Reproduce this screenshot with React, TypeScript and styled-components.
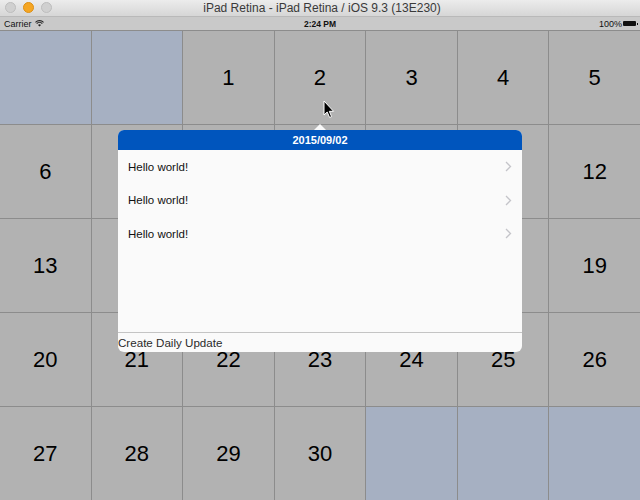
import React from 'react';
import styled, { createGlobalStyle } from 'styled-components';

const GlobalStyle = createGlobalStyle`
  html, body {
    margin: 0;
    padding: 0;
    width: 640px;
    height: 500px;
    overflow: hidden;
    font-family: "Liberation Sans", Arial, sans-serif;
    background: #b2b2b2;
  }
`;

// blank cells are null
const days: (number | null)[] = [
  null, null, 1, 2, 3, 4, 5,
  6, 7, 8, 9, 10, 11, 12,
  13, 14, 15, 16, 17, 18, 19,
  20, 21, 22, 23, 24, 25, 26,
  27, 28, 29, 30, null, null, null,
];

const items = ['Hello world!', 'Hello world!', 'Hello world!'];

export default function App() {
  return (
    <Screen>
      <GlobalStyle />
      <TitleBar>
        <Lights>
          <Light />
          <Light $color="#f5a623" $border="#dd8f14" />
          <Light />
        </Lights>
        <WindowTitle>iPad Retina - iPad Retina / iOS 9.3 (13E230)</WindowTitle>
      </TitleBar>
      <StatusBar>
        <StatusLeft>
          Carrier
          <svg width="9" height="7" viewBox="0 0 10 8">
            <path d="M5 7.5 L3.3 5.6 A2.4 2.4 0 0 1 6.7 5.6 Z" fill="#222" />
            <path d="M1.8 4.1 A4.6 4.6 0 0 1 8.2 4.1" stroke="#222" strokeWidth="1.2" fill="none" />
            <path d="M0.4 2.6 A6.6 6.6 0 0 1 9.6 2.6" stroke="#222" strokeWidth="1.2" fill="none" />
          </svg>
        </StatusLeft>
        <StatusTime>2:24 PM</StatusTime>
        <StatusRight>
          100%
          <Battery />
        </StatusRight>
      </StatusBar>
      <Calendar>
        {days.map((d, i) => (
          <Cell key={i} $blank={d === null}>{d}</Cell>
        ))}
      </Calendar>

      <Popover>
        <Arrow />
        <PopHeader>2015/09/02</PopHeader>
        <PopList>
          {items.map((t, i) => (
            <PopRow key={i}>
              <span>{t}</span>
              <svg width="7" height="11" viewBox="0 0 7 11">
                <path d="M1 1 L5.5 5.5 L1 10" stroke="#c4c4c9" strokeWidth="1.3" fill="none" />
              </svg>
            </PopRow>
          ))}
        </PopList>
        <PopFooter>Create Daily Update</PopFooter>
      </Popover>

      <Cursor width="12" height="19" viewBox="0 0 12 19">
        <path d="M1 1 L1 15 L4.2 12 L6.6 17.5 L8.6 16.6 L6.3 11.3 L10.6 11.3 Z" fill="#000" stroke="#fff" strokeWidth="1" />
      </Cursor>
    </Screen>
  );
}

const Screen = styled.div`
  position: relative;
  width: 640px;
  height: 500px;
  display: flex;
  flex-direction: column;
  overflow: hidden;
`;

const TitleBar = styled.div`
  height: 17px;
  flex: none;
  display: flex;
  align-items: center;
  justify-content: center;
  position: relative;
  background: linear-gradient(#ececec, #d6d6d6);
  border-bottom: 1px solid #b9b9b9;
  box-sizing: border-box;
`;

const Lights = styled.div`
  position: absolute;
  left: 5px;
  top: 2px;
  display: flex;
  gap: 7px;
`;

const Light = styled.div<{ $color?: string; $border?: string }>`
  width: 11px;
  height: 11px;
  border-radius: 50%;
  box-sizing: border-box;
  background: ${(p) => p.$color || '#d0d0d0'};
  border: 1px solid ${(p) => p.$border || '#bdbdbd'};
`;

const WindowTitle = styled.div`
  font-size: 12px;
  color: #3a3a3a;
  margin-left: 4px;
`;

const StatusBar = styled.div`
  height: 13px;
  flex: none;
  display: flex;
  align-items: center;
  justify-content: space-between;
  padding: 0 4px;
  background: #c9c9c9;
  font-size: 9px;
  color: #111;
`;

const StatusLeft = styled.div`
  display: flex;
  align-items: center;
  gap: 3px;
  width: 120px;
`;

const StatusTime = styled.div`
  font-weight: bold;
  font-size: 8.5px;
`;

const StatusRight = styled.div`
  display: flex;
  align-items: center;
  justify-content: flex-end;
  gap: 1px;
  width: 120px;
`;

const Battery = styled.div`
  width: 13px;
  height: 5px;
  background: #111;
  border-radius: 1px;
  position: relative;
  &::after {
    content: '';
    position: absolute;
    right: -2px;
    top: 1.5px;
    width: 1.5px;
    height: 2px;
    background: #111;
  }
`;

const Calendar = styled.div`
  flex: 1;
  display: grid;
  grid-template-columns: repeat(7, 1fr);
  grid-template-rows: repeat(5, 1fr);
  gap: 1px;
  background: #8c8c8c;
  border-top: 1px solid #8c8c8c;
`;

const Cell = styled.div<{ $blank: boolean }>`
  display: flex;
  align-items: center;
  justify-content: center;
  background: ${(p) => (p.$blank ? '#a6b0c2' : '#b2b2b2')};
  font-size: 22px;
  color: #000;
`;

const Popover = styled.div`
  position: absolute;
  left: 118px;
  top: 130px;
  width: 404px;
  height: 222px;
  background: #fafafa;
  border-radius: 6px;
  display: flex;
  flex-direction: column;
`;

const Arrow = styled.div`
  position: absolute;
  left: 196px;
  top: -6px;
  width: 0;
  height: 0;
  border-left: 6px solid transparent;
  border-right: 6px solid transparent;
  border-bottom: 6px solid #fafafa;
`;

const PopHeader = styled.div`
  height: 20px;
  flex: none;
  background: #0055bd;
  color: #fff;
  font-size: 11px;
  font-weight: bold;
  display: flex;
  align-items: center;
  justify-content: center;
  border-radius: 6px 6px 0 0;
`;

const PopList = styled.div`
  flex: 1;
  display: flex;
  flex-direction: column;
`;

const PopRow = styled.div`
  height: 33.5px;
  display: flex;
  align-items: center;
  justify-content: space-between;
  padding: 0 10px 0 10px;
  font-size: 11.5px;
  color: #111;
`;

const PopFooter = styled.div`
  height: 20px;
  flex: none;
  border-top: 1px solid #c4c4c4;
  box-sizing: border-box;
  display: flex;
  align-items: center;
  font-size: 11.6px;
  color: #2a2a2a;
`;

const Cursor = styled.svg`
  position: absolute;
  left: 323px;
  top: 100px;
`;
